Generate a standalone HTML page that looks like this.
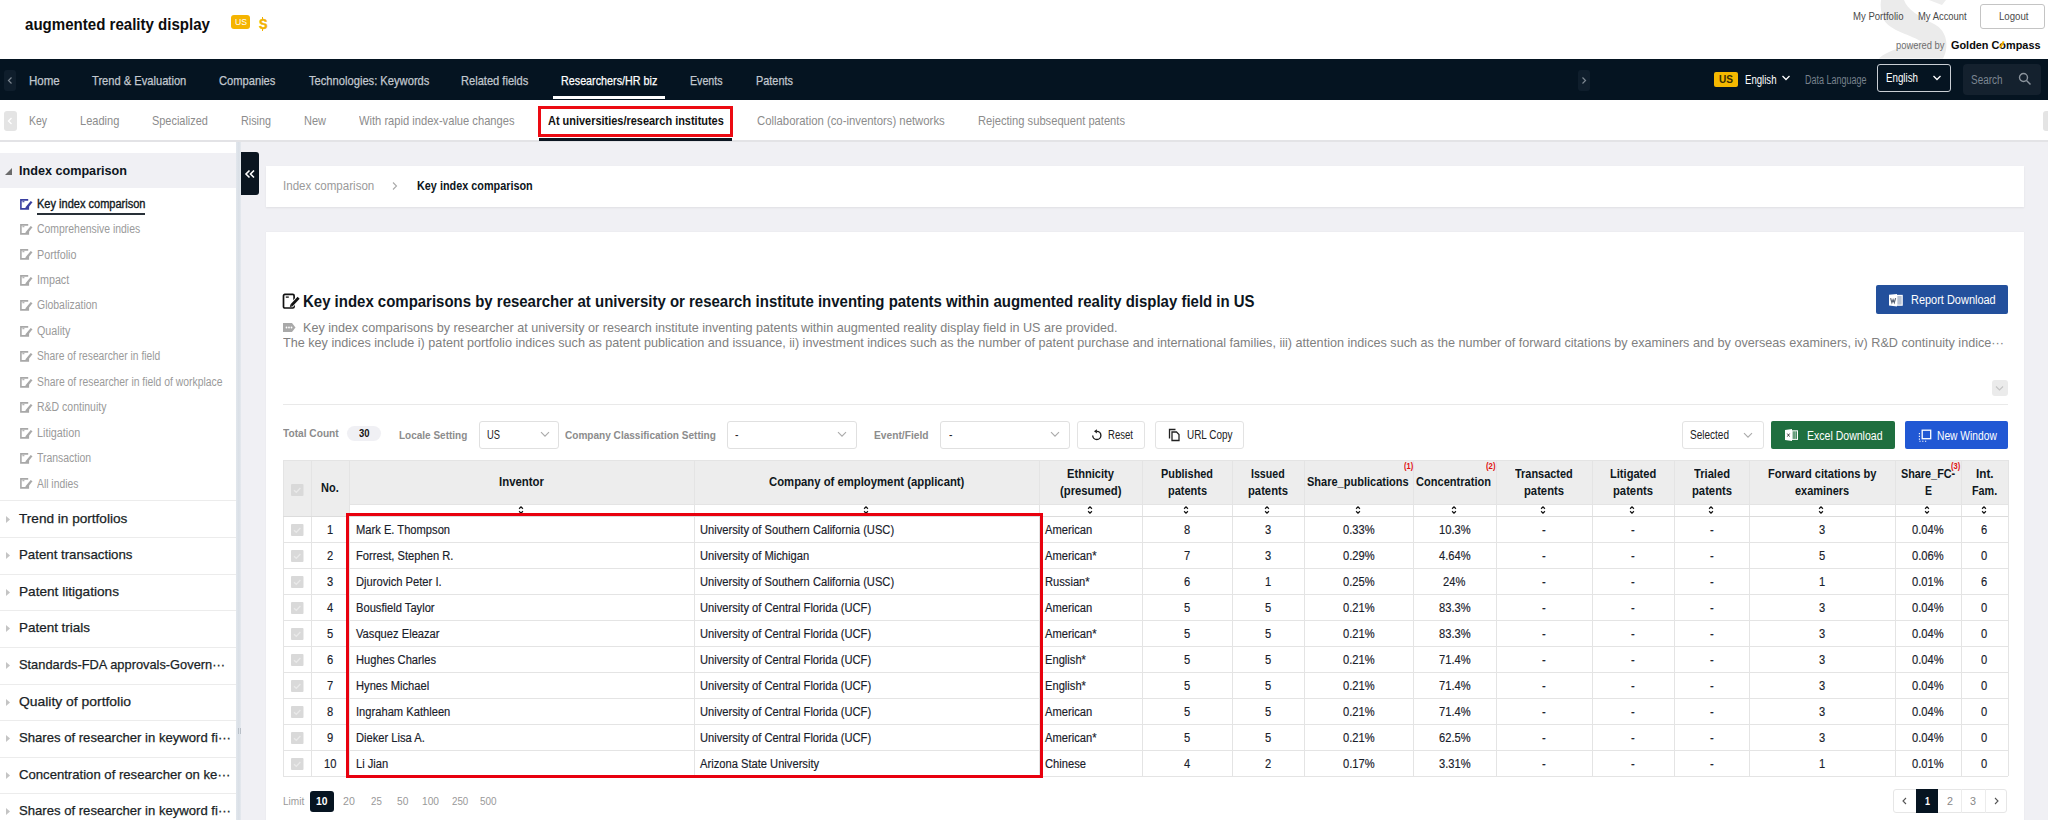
<!DOCTYPE html>
<html><head><meta charset="utf-8"><title>augmented reality display</title>
<style>
*{box-sizing:border-box;margin:0;padding:0}
html,body{width:2048px;height:820px;overflow:hidden;background:#f0f0f4;font-family:"Liberation Sans",sans-serif}
body{position:relative}
.t{position:absolute;white-space:nowrap;line-height:1;transform-origin:0 0}
svg{overflow:visible}
</style></head><body>
<div style="position:absolute;left:0px;top:0px;width:2048px;height:59px;background:#fff"></div>
<svg style="position:absolute;left:1870px;top:0" width="90" height="59" viewBox="0 0 90 59"><path d="M11 0 L34 0 C37 9 48 16 64 24 C78 31 79 48 73 58.5 L9 58.5 C17 50 38 46 52 42 C42 35 20 31 14 20 C11 14 10 6 11 0 Z" fill="#ebebeb"/><path d="M59 0 L76 0 L72 5 Z" fill="#ededed"/></svg>
<div style="position:absolute;left:231px;top:15px;width:19px;height:14px;background:#f5b400;border-radius:3px"></div>
<div style="position:absolute;left:261.8px;top:16.8px;width:1.6px;height:2.4px;background:#f2b200"></div>
<div style="position:absolute;left:261.8px;top:29px;width:1.6px;height:2.2px;background:#f2b200"></div>
<div style="position:absolute;left:1980px;top:4px;width:65px;height:25px;border:1px solid #c4c4c4;border-radius:3px;background:transparent"></div>
<div style="position:absolute;left:0px;top:59px;width:2048px;height:40.5px;background:#051421"></div>
<div style="position:absolute;left:4px;top:70px;width:12px;height:21px;background:#0f1e2c;border-radius:3px"></div>
<svg style="position:absolute;left:4px;top:70px" width="12" height="21"><path d="M7.5 7.5 L4.5 10.5 L7.5 13.5" stroke="#7d8791" stroke-width="1.2" fill="none"/></svg>
<div style="position:absolute;left:553px;top:96px;width:112px;height:3px;background:#fff"></div>
<div style="position:absolute;left:1578px;top:70px;width:12px;height:21px;background:#0f1e2c;border-radius:3px"></div>
<svg style="position:absolute;left:1578px;top:70px" width="12" height="21"><path d="M4.5 7.5 L7.5 10.5 L4.5 13.5" stroke="#7d8791" stroke-width="1.2" fill="none"/></svg>
<div style="position:absolute;left:1714px;top:71.5px;width:24px;height:15.5px;background:#f5b800;border-radius:2px"></div>
<svg style="position:absolute;left:1781px;top:74px" width="10" height="8"><path d="M1.5 2 L5 5.5 L8.5 2" stroke="#fff" stroke-width="1.3" fill="none"/></svg>
<div style="position:absolute;left:1877px;top:64.3px;width:74px;height:28px;border:1px solid #c9ced4;border-radius:3px"></div>
<svg style="position:absolute;left:1932px;top:74px" width="10" height="8"><path d="M1.5 2 L5 5.5 L8.5 2" stroke="#fff" stroke-width="1.3" fill="none"/></svg>
<div style="position:absolute;left:1962.5px;top:64.3px;width:78px;height:31px;background:#14212e;border-radius:4px"></div>
<svg style="position:absolute;left:2018px;top:72px" width="14" height="14"><circle cx="5.5" cy="5.5" r="4" stroke="#8b949d" stroke-width="1.4" fill="none"/><path d="M8.5 8.5 L12.5 12.5" stroke="#8b949d" stroke-width="1.5"/></svg>
<div style="position:absolute;left:0px;top:100px;width:2048px;height:40px;background:#fff"></div>
<div style="position:absolute;left:0px;top:140px;width:2048px;height:2px;background:#e3e3e6"></div>
<div style="position:absolute;left:4px;top:111px;width:12.5px;height:20px;background:#e4e4e4;border-radius:3px"></div>
<svg style="position:absolute;left:4px;top:111px" width="12" height="20"><path d="M7.5 7 L4.5 10 L7.5 13" stroke="#fff" stroke-width="1.3" fill="none"/></svg>
<div style="position:absolute;left:2043px;top:111px;width:6px;height:20px;background:#e4e4e4;border-radius:3px 0 0 3px"></div>
<div style="position:absolute;left:539px;top:138px;width:193px;height:2.5px;background:#0b1520"></div>
<div style="position:absolute;left:0px;top:142px;width:236px;height:678px;background:#fff"></div>
<div style="position:absolute;left:236px;top:142px;width:5px;height:678px;background:linear-gradient(90deg,#e2e7ed,#d9dfe6 60%,#e6eaef)"></div>
<div style="position:absolute;left:237.5px;top:727.8px;width:0.8px;height:6px;background:#b9c0c8"></div>
<div style="position:absolute;left:239.5px;top:727.8px;width:0.8px;height:6px;background:#b9c0c8"></div>
<div style="position:absolute;left:0px;top:152.7px;width:236px;height:35px;background:#f0f0f4"></div>
<svg style="position:absolute;left:4px;top:166px" width="9" height="10"><path d="M1 9 L8 9 L8 2 Z" fill="#6b6b6b"/></svg>
<svg style="position:absolute;left:20px;top:198.5px" width="13" height="11" viewBox="0 0 13 11"><path d="M8.2 0.9 H0.9 V9.9 H8.3 V6.5" stroke="#3a3fa0" stroke-width="1.6" fill="none"/><path d="M2.4 2.7 H4.4" stroke="#3a3fa0" stroke-width="1.1"/><path d="M11.6 2.6 L6.2 9.3" stroke="#3a3fa0" stroke-width="2.3"/></svg>
<svg style="position:absolute;left:20px;top:223.9px" width="13" height="11" viewBox="0 0 13 11"><path d="M8.2 0.9 H0.9 V9.9 H8.3 V6.5" stroke="#a8a8a8" stroke-width="1.6" fill="none"/><path d="M2.4 2.7 H4.4" stroke="#a8a8a8" stroke-width="1.1"/><path d="M11.6 2.6 L6.2 9.3" stroke="#a8a8a8" stroke-width="2.3"/></svg>
<svg style="position:absolute;left:20px;top:249.4px" width="13" height="11" viewBox="0 0 13 11"><path d="M8.2 0.9 H0.9 V9.9 H8.3 V6.5" stroke="#a8a8a8" stroke-width="1.6" fill="none"/><path d="M2.4 2.7 H4.4" stroke="#a8a8a8" stroke-width="1.1"/><path d="M11.6 2.6 L6.2 9.3" stroke="#a8a8a8" stroke-width="2.3"/></svg>
<svg style="position:absolute;left:20px;top:274.8px" width="13" height="11" viewBox="0 0 13 11"><path d="M8.2 0.9 H0.9 V9.9 H8.3 V6.5" stroke="#a8a8a8" stroke-width="1.6" fill="none"/><path d="M2.4 2.7 H4.4" stroke="#a8a8a8" stroke-width="1.1"/><path d="M11.6 2.6 L6.2 9.3" stroke="#a8a8a8" stroke-width="2.3"/></svg>
<svg style="position:absolute;left:20px;top:300.3px" width="13" height="11" viewBox="0 0 13 11"><path d="M8.2 0.9 H0.9 V9.9 H8.3 V6.5" stroke="#a8a8a8" stroke-width="1.6" fill="none"/><path d="M2.4 2.7 H4.4" stroke="#a8a8a8" stroke-width="1.1"/><path d="M11.6 2.6 L6.2 9.3" stroke="#a8a8a8" stroke-width="2.3"/></svg>
<svg style="position:absolute;left:20px;top:325.8px" width="13" height="11" viewBox="0 0 13 11"><path d="M8.2 0.9 H0.9 V9.9 H8.3 V6.5" stroke="#a8a8a8" stroke-width="1.6" fill="none"/><path d="M2.4 2.7 H4.4" stroke="#a8a8a8" stroke-width="1.1"/><path d="M11.6 2.6 L6.2 9.3" stroke="#a8a8a8" stroke-width="2.3"/></svg>
<svg style="position:absolute;left:20px;top:351.2px" width="13" height="11" viewBox="0 0 13 11"><path d="M8.2 0.9 H0.9 V9.9 H8.3 V6.5" stroke="#a8a8a8" stroke-width="1.6" fill="none"/><path d="M2.4 2.7 H4.4" stroke="#a8a8a8" stroke-width="1.1"/><path d="M11.6 2.6 L6.2 9.3" stroke="#a8a8a8" stroke-width="2.3"/></svg>
<svg style="position:absolute;left:20px;top:376.7px" width="13" height="11" viewBox="0 0 13 11"><path d="M8.2 0.9 H0.9 V9.9 H8.3 V6.5" stroke="#a8a8a8" stroke-width="1.6" fill="none"/><path d="M2.4 2.7 H4.4" stroke="#a8a8a8" stroke-width="1.1"/><path d="M11.6 2.6 L6.2 9.3" stroke="#a8a8a8" stroke-width="2.3"/></svg>
<svg style="position:absolute;left:20px;top:402.1px" width="13" height="11" viewBox="0 0 13 11"><path d="M8.2 0.9 H0.9 V9.9 H8.3 V6.5" stroke="#a8a8a8" stroke-width="1.6" fill="none"/><path d="M2.4 2.7 H4.4" stroke="#a8a8a8" stroke-width="1.1"/><path d="M11.6 2.6 L6.2 9.3" stroke="#a8a8a8" stroke-width="2.3"/></svg>
<svg style="position:absolute;left:20px;top:427.6px" width="13" height="11" viewBox="0 0 13 11"><path d="M8.2 0.9 H0.9 V9.9 H8.3 V6.5" stroke="#a8a8a8" stroke-width="1.6" fill="none"/><path d="M2.4 2.7 H4.4" stroke="#a8a8a8" stroke-width="1.1"/><path d="M11.6 2.6 L6.2 9.3" stroke="#a8a8a8" stroke-width="2.3"/></svg>
<svg style="position:absolute;left:20px;top:453.0px" width="13" height="11" viewBox="0 0 13 11"><path d="M8.2 0.9 H0.9 V9.9 H8.3 V6.5" stroke="#a8a8a8" stroke-width="1.6" fill="none"/><path d="M2.4 2.7 H4.4" stroke="#a8a8a8" stroke-width="1.1"/><path d="M11.6 2.6 L6.2 9.3" stroke="#a8a8a8" stroke-width="2.3"/></svg>
<svg style="position:absolute;left:20px;top:478.4px" width="13" height="11" viewBox="0 0 13 11"><path d="M8.2 0.9 H0.9 V9.9 H8.3 V6.5" stroke="#a8a8a8" stroke-width="1.6" fill="none"/><path d="M2.4 2.7 H4.4" stroke="#a8a8a8" stroke-width="1.1"/><path d="M11.6 2.6 L6.2 9.3" stroke="#a8a8a8" stroke-width="2.3"/></svg>
<div style="position:absolute;left:36.6px;top:212.8px;width:108.5px;height:2px;background:#283038"></div>
<div style="position:absolute;left:0px;top:500.3px;width:236px;height:1px;background:#ececec"></div>
<svg style="position:absolute;left:5px;top:514.6px" width="6" height="9"><path d="M1 1 L5 4.5 L1 8 Z" fill="#c4c4c4"/></svg>
<div style="position:absolute;left:0px;top:537.2px;width:236px;height:1px;background:#ececec"></div>
<svg style="position:absolute;left:5px;top:551.2px" width="6" height="9"><path d="M1 1 L5 4.5 L1 8 Z" fill="#c4c4c4"/></svg>
<div style="position:absolute;left:0px;top:573.8px;width:236px;height:1px;background:#ececec"></div>
<svg style="position:absolute;left:5px;top:587.8px" width="6" height="9"><path d="M1 1 L5 4.5 L1 8 Z" fill="#c4c4c4"/></svg>
<div style="position:absolute;left:0px;top:610.4px;width:236px;height:1px;background:#ececec"></div>
<svg style="position:absolute;left:5px;top:624.4px" width="6" height="9"><path d="M1 1 L5 4.5 L1 8 Z" fill="#c4c4c4"/></svg>
<div style="position:absolute;left:0px;top:647.0px;width:236px;height:1px;background:#ececec"></div>
<svg style="position:absolute;left:5px;top:661.0px" width="6" height="9"><path d="M1 1 L5 4.5 L1 8 Z" fill="#c4c4c4"/></svg>
<div style="position:absolute;left:0px;top:683.6px;width:236px;height:1px;background:#ececec"></div>
<svg style="position:absolute;left:5px;top:697.6px" width="6" height="9"><path d="M1 1 L5 4.5 L1 8 Z" fill="#c4c4c4"/></svg>
<div style="position:absolute;left:0px;top:720.2px;width:236px;height:1px;background:#ececec"></div>
<svg style="position:absolute;left:5px;top:734.2px" width="6" height="9"><path d="M1 1 L5 4.5 L1 8 Z" fill="#c4c4c4"/></svg>
<div style="position:absolute;left:0px;top:756.8px;width:236px;height:1px;background:#ececec"></div>
<svg style="position:absolute;left:5px;top:770.8px" width="6" height="9"><path d="M1 1 L5 4.5 L1 8 Z" fill="#c4c4c4"/></svg>
<div style="position:absolute;left:0px;top:793.4px;width:236px;height:1px;background:#ececec"></div>
<svg style="position:absolute;left:5px;top:807.4px" width="6" height="9"><path d="M1 1 L5 4.5 L1 8 Z" fill="#c4c4c4"/></svg>
<div style="position:absolute;left:241px;top:152.4px;width:18px;height:42.6px;background:#0a1520;border-radius:0 3px 3px 0"></div>
<svg style="position:absolute;left:241px;top:152px" width="18" height="43"><path d="M8.5 18.5 L5 22 L8.5 25.5 M13 18.5 L9.5 22 L13 25.5" stroke="#fff" stroke-width="1.6" fill="none"/></svg>
<div style="position:absolute;left:266px;top:166px;width:1758px;height:40.5px;background:#fff;box-shadow:0 1px 2px rgba(0,0,0,0.07)"></div>
<svg style="position:absolute;left:391px;top:181px" width="8" height="10"><path d="M2 1.5 L5.5 5 L2 8.5" stroke="#aaa" stroke-width="1.1" fill="none"/></svg>
<div style="position:absolute;left:266px;top:231.7px;width:1758px;height:600px;background:#fff;box-shadow:0 0 1px rgba(0,0,0,0.08)"></div>
<svg style="position:absolute;left:282px;top:292px" width="18" height="17" viewBox="0 0 18 17"><rect x="1.5" y="2.4" width="10.6" height="13.6" rx="1.3" stroke="#111" stroke-width="1.7" fill="none"/><path d="M3.8 5.1 H6.8" stroke="#111" stroke-width="1.3"/><path d="M16.6 5.8 L9.6 13.2" stroke="#fff" stroke-width="4.6"/><path d="M16.6 5.8 L9.6 13.2" stroke="#111" stroke-width="2.8"/><path d="M8.6 12.2 L10.8 14.2 L7.8 15 Z" fill="#111"/></svg>
<div style="position:absolute;left:1876px;top:285.4px;width:132px;height:28.3px;background:#23509c;border-radius:2px"></div>
<svg style="position:absolute;left:1889px;top:294px" width="14" height="13" viewBox="0 0 14 13"><rect x="7.8" y="1.4" width="5.4" height="9.8" fill="#b9c3d3" stroke="#fff" stroke-width="1.1"/><path d="M0 0.8 L8 0 L8 12.5 L0 11.6 Z" fill="#fff"/><path d="M1.6 4.2 L2.9 8.6 L4.1 5.6 L5.3 8.6 L6.6 4.2" stroke="#5a6475" stroke-width="1.2" fill="none"/></svg>
<svg style="position:absolute;left:283px;top:323px" width="13" height="9" viewBox="0 0 13 9"><path d="M0 0 H9 L12.5 4.5 L9 9 H0 Z" fill="#a9a9a9"/><circle cx="3.5" cy="4.5" r="0.9" fill="#fff"/><circle cx="6" cy="4.5" r="0.9" fill="#fff"/><circle cx="8.5" cy="4.5" r="0.9" fill="#fff"/></svg>
<div style="position:absolute;left:1991.5px;top:379.6px;width:16.5px;height:16px;background:#ebebeb;border-radius:3px"></div>
<svg style="position:absolute;left:1991px;top:380px" width="17" height="16"><path d="M5 6.5 L8.5 10 L12 6.5" stroke="#c4c4c4" stroke-width="1.1" fill="none"/></svg>
<div style="position:absolute;left:283px;top:404px;width:1725px;height:1px;background:#e9e9e9"></div>
<div style="position:absolute;left:346.8px;top:425.8px;width:34.5px;height:15.5px;background:#f0f0f4;border-radius:8px"></div>
<div style="position:absolute;left:478.6px;top:421.3px;width:80.89999999999998px;height:28px;border:1px solid #e0e0e0;border-radius:3px;background:#fff"></div>
<svg style="position:absolute;left:539.5px;top:431px" width="10" height="7"><path d="M1 1.2 L5 5.2 L9 1.2" stroke="#aaa" stroke-width="1.1" fill="none"/></svg>
<div style="position:absolute;left:726.5px;top:421.3px;width:130.39999999999998px;height:28px;border:1px solid #e0e0e0;border-radius:3px;background:#fff"></div>
<svg style="position:absolute;left:836.9px;top:431px" width="10" height="7"><path d="M1 1.2 L5 5.2 L9 1.2" stroke="#aaa" stroke-width="1.1" fill="none"/></svg>
<div style="position:absolute;left:940px;top:421.3px;width:129.70000000000005px;height:28px;border:1px solid #e0e0e0;border-radius:3px;background:#fff"></div>
<svg style="position:absolute;left:1049.7px;top:431px" width="10" height="7"><path d="M1 1.2 L5 5.2 L9 1.2" stroke="#aaa" stroke-width="1.1" fill="none"/></svg>
<div style="position:absolute;left:1077.4px;top:421.2px;width:68px;height:28.3px;border:1px solid #e3e3e3;border-radius:3px;background:#fff"></div>
<svg style="position:absolute;left:1091px;top:429px" width="12" height="13" viewBox="0 0 12 13"><path d="M5.8 2.3 A4.1 4.1 0 1 1 1.7 6.4" stroke="#1a1a1a" stroke-width="1.35" fill="none"/><path d="M5.9 0.2 L3 2.3 L5.9 4.5 Z" fill="#1a1a1a"/></svg>
<div style="position:absolute;left:1155.2px;top:421.2px;width:88.4px;height:28.3px;border:1px solid #e3e3e3;border-radius:3px;background:#fff"></div>
<svg style="position:absolute;left:1168px;top:428px" width="13" height="14" viewBox="0 0 13 14"><path d="M1.5 10.5 V1.5 H7.5" stroke="#222" stroke-width="1.3" fill="none"/><path d="M4 4 H8.5 L11 6.5 V12.5 H4 Z" stroke="#222" stroke-width="1.3" fill="none"/></svg>
<div style="position:absolute;left:1681.5px;top:421.2px;width:82px;height:28.3px;border:1px solid #e3e3e3;border-radius:3px;background:#fff"></div>
<svg style="position:absolute;left:1743px;top:432px" width="10" height="7"><path d="M1 1.2 L5 5.2 L9 1.2" stroke="#aaa" stroke-width="1.1" fill="none"/></svg>
<div style="position:absolute;left:1771.2px;top:421px;width:123.6px;height:28.2px;background:#1f6f3f;border-radius:2px"></div>
<svg style="position:absolute;left:1785px;top:428.5px" width="14" height="13" viewBox="0 0 14 13"><rect x="7.2" y="1.8" width="5.3" height="8.6" fill="none" stroke="#fff" stroke-width="1"/><path d="M9 2 V10.3 M10.8 2 V10.3" stroke="#d8e6dc" stroke-width="0.8"/><path d="M0 0.9 L7 0 L7 12 L0 11 Z" fill="#fff"/><path d="M2.3 4.6 L4.6 7.6 M4.6 4.6 L2.3 7.6" stroke="#333" stroke-width="0.9"/></svg>
<div style="position:absolute;left:1904.5px;top:421px;width:103.1px;height:28.2px;background:#2158d4;border-radius:2px"></div>
<svg style="position:absolute;left:1917.5px;top:429px" width="14" height="14" viewBox="0 0 14 14"><rect x="4.2" y="1.2" width="8.5" height="8.5" fill="none" stroke="#fff" stroke-width="1.3"/><path d="M1.4 4 V5.2 M1.4 6.8 V8 M1.4 9.6 V10.8 M1.4 12.2 H2.6 M4.2 12.2 H5.4 M7 12.2 H8.2" stroke="#fff" stroke-width="1.1"/></svg>
<div style="position:absolute;left:283px;top:460px;width:1725px;height:43.5px;background:#ededed"></div>
<div style="position:absolute;left:283px;top:503.5px;width:66px;height:12.5px;background:#ededed"></div>
<div style="position:absolute;left:282.5px;top:460px;width:1px;height:316px;background:#e4e4e4"></div>
<div style="position:absolute;left:310.5px;top:460px;width:1px;height:316px;background:#e4e4e4"></div>
<div style="position:absolute;left:348.5px;top:460px;width:1px;height:316px;background:#e4e4e4"></div>
<div style="position:absolute;left:693.5px;top:460px;width:1px;height:316px;background:#e4e4e4"></div>
<div style="position:absolute;left:1038.5px;top:460px;width:1px;height:316px;background:#e4e4e4"></div>
<div style="position:absolute;left:1141.5px;top:460px;width:1px;height:316px;background:#e4e4e4"></div>
<div style="position:absolute;left:1231.5px;top:460px;width:1px;height:316px;background:#e4e4e4"></div>
<div style="position:absolute;left:1303.5px;top:460px;width:1px;height:316px;background:#e4e4e4"></div>
<div style="position:absolute;left:1412.5px;top:460px;width:1px;height:316px;background:#e4e4e4"></div>
<div style="position:absolute;left:1495.5px;top:460px;width:1px;height:316px;background:#e4e4e4"></div>
<div style="position:absolute;left:1591.5px;top:460px;width:1px;height:316px;background:#e4e4e4"></div>
<div style="position:absolute;left:1673.5px;top:460px;width:1px;height:316px;background:#e4e4e4"></div>
<div style="position:absolute;left:1748.5px;top:460px;width:1px;height:316px;background:#e4e4e4"></div>
<div style="position:absolute;left:1894.5px;top:460px;width:1px;height:316px;background:#e4e4e4"></div>
<div style="position:absolute;left:1960.5px;top:460px;width:1px;height:316px;background:#e4e4e4"></div>
<div style="position:absolute;left:2007.5px;top:460px;width:1px;height:316px;background:#e4e4e4"></div>
<div style="position:absolute;left:283px;top:460px;width:1725px;height:1px;background:#e4e4e4"></div>
<div style="position:absolute;left:349px;top:503.5px;width:1659px;height:1px;background:#e4e4e4"></div>
<div style="position:absolute;left:283px;top:515.5px;width:1725px;height:1.5px;background:#dcdcdc"></div>
<div style="position:absolute;left:283px;top:541.5px;width:1725px;height:1px;background:#e4e4e4"></div>
<div style="position:absolute;left:283px;top:567.5px;width:1725px;height:1px;background:#e4e4e4"></div>
<div style="position:absolute;left:283px;top:593.5px;width:1725px;height:1px;background:#e4e4e4"></div>
<div style="position:absolute;left:283px;top:619.5px;width:1725px;height:1px;background:#e4e4e4"></div>
<div style="position:absolute;left:283px;top:645.5px;width:1725px;height:1px;background:#e4e4e4"></div>
<div style="position:absolute;left:283px;top:671.5px;width:1725px;height:1px;background:#e4e4e4"></div>
<div style="position:absolute;left:283px;top:697.5px;width:1725px;height:1px;background:#e4e4e4"></div>
<div style="position:absolute;left:283px;top:723.5px;width:1725px;height:1px;background:#e4e4e4"></div>
<div style="position:absolute;left:283px;top:749.5px;width:1725px;height:1px;background:#e4e4e4"></div>
<div style="position:absolute;left:283px;top:775.5px;width:1725px;height:1px;background:#e4e4e4"></div>
<svg style="position:absolute;left:517.8px;top:505px" width="6" height="10"><path d="M1.1 3.7 L3 1.9 L4.9 3.7 M1.1 6.3 L3 8.1 L4.9 6.3" stroke="#111" stroke-width="1.25" fill="none"/></svg>
<svg style="position:absolute;left:862.8px;top:505px" width="6" height="10"><path d="M1.1 3.7 L3 1.9 L4.9 3.7 M1.1 6.3 L3 8.1 L4.9 6.3" stroke="#111" stroke-width="1.25" fill="none"/></svg>
<svg style="position:absolute;left:1086.8px;top:505px" width="6" height="10"><path d="M1.1 3.7 L3 1.9 L4.9 3.7 M1.1 6.3 L3 8.1 L4.9 6.3" stroke="#111" stroke-width="1.25" fill="none"/></svg>
<svg style="position:absolute;left:1183.3px;top:505px" width="6" height="10"><path d="M1.1 3.7 L3 1.9 L4.9 3.7 M1.1 6.3 L3 8.1 L4.9 6.3" stroke="#111" stroke-width="1.25" fill="none"/></svg>
<svg style="position:absolute;left:1264.3px;top:505px" width="6" height="10"><path d="M1.1 3.7 L3 1.9 L4.9 3.7 M1.1 6.3 L3 8.1 L4.9 6.3" stroke="#111" stroke-width="1.25" fill="none"/></svg>
<svg style="position:absolute;left:1354.8px;top:505px" width="6" height="10"><path d="M1.1 3.7 L3 1.9 L4.9 3.7 M1.1 6.3 L3 8.1 L4.9 6.3" stroke="#111" stroke-width="1.25" fill="none"/></svg>
<svg style="position:absolute;left:1450.8px;top:505px" width="6" height="10"><path d="M1.1 3.7 L3 1.9 L4.9 3.7 M1.1 6.3 L3 8.1 L4.9 6.3" stroke="#111" stroke-width="1.25" fill="none"/></svg>
<svg style="position:absolute;left:1540.3px;top:505px" width="6" height="10"><path d="M1.1 3.7 L3 1.9 L4.9 3.7 M1.1 6.3 L3 8.1 L4.9 6.3" stroke="#111" stroke-width="1.25" fill="none"/></svg>
<svg style="position:absolute;left:1629.3px;top:505px" width="6" height="10"><path d="M1.1 3.7 L3 1.9 L4.9 3.7 M1.1 6.3 L3 8.1 L4.9 6.3" stroke="#111" stroke-width="1.25" fill="none"/></svg>
<svg style="position:absolute;left:1707.8px;top:505px" width="6" height="10"><path d="M1.1 3.7 L3 1.9 L4.9 3.7 M1.1 6.3 L3 8.1 L4.9 6.3" stroke="#111" stroke-width="1.25" fill="none"/></svg>
<svg style="position:absolute;left:1818.3px;top:505px" width="6" height="10"><path d="M1.1 3.7 L3 1.9 L4.9 3.7 M1.1 6.3 L3 8.1 L4.9 6.3" stroke="#111" stroke-width="1.25" fill="none"/></svg>
<svg style="position:absolute;left:1924.3px;top:505px" width="6" height="10"><path d="M1.1 3.7 L3 1.9 L4.9 3.7 M1.1 6.3 L3 8.1 L4.9 6.3" stroke="#111" stroke-width="1.25" fill="none"/></svg>
<svg style="position:absolute;left:1980.8px;top:505px" width="6" height="10"><path d="M1.1 3.7 L3 1.9 L4.9 3.7 M1.1 6.3 L3 8.1 L4.9 6.3" stroke="#111" stroke-width="1.25" fill="none"/></svg>
<svg style="position:absolute;left:290.7px;top:483.8px" width="13" height="12"><rect x="0" y="0" width="12.5" height="12" rx="1" fill="#d9d9d9"/><path d="M3 6.2 L5.3 8.3 L9.4 4" stroke="#e9e9e9" stroke-width="1.3" fill="none"/></svg>
<svg style="position:absolute;left:290.7px;top:523.5px" width="13" height="12"><rect x="0" y="0" width="12.5" height="12" rx="1" fill="#d9d9d9"/><path d="M3 6.2 L5.3 8.3 L9.4 4" stroke="#e9e9e9" stroke-width="1.3" fill="none"/></svg>
<svg style="position:absolute;left:290.7px;top:549.5px" width="13" height="12"><rect x="0" y="0" width="12.5" height="12" rx="1" fill="#d9d9d9"/><path d="M3 6.2 L5.3 8.3 L9.4 4" stroke="#e9e9e9" stroke-width="1.3" fill="none"/></svg>
<svg style="position:absolute;left:290.7px;top:575.5px" width="13" height="12"><rect x="0" y="0" width="12.5" height="12" rx="1" fill="#d9d9d9"/><path d="M3 6.2 L5.3 8.3 L9.4 4" stroke="#e9e9e9" stroke-width="1.3" fill="none"/></svg>
<svg style="position:absolute;left:290.7px;top:601.5px" width="13" height="12"><rect x="0" y="0" width="12.5" height="12" rx="1" fill="#d9d9d9"/><path d="M3 6.2 L5.3 8.3 L9.4 4" stroke="#e9e9e9" stroke-width="1.3" fill="none"/></svg>
<svg style="position:absolute;left:290.7px;top:627.5px" width="13" height="12"><rect x="0" y="0" width="12.5" height="12" rx="1" fill="#d9d9d9"/><path d="M3 6.2 L5.3 8.3 L9.4 4" stroke="#e9e9e9" stroke-width="1.3" fill="none"/></svg>
<svg style="position:absolute;left:290.7px;top:653.5px" width="13" height="12"><rect x="0" y="0" width="12.5" height="12" rx="1" fill="#d9d9d9"/><path d="M3 6.2 L5.3 8.3 L9.4 4" stroke="#e9e9e9" stroke-width="1.3" fill="none"/></svg>
<svg style="position:absolute;left:290.7px;top:679.5px" width="13" height="12"><rect x="0" y="0" width="12.5" height="12" rx="1" fill="#d9d9d9"/><path d="M3 6.2 L5.3 8.3 L9.4 4" stroke="#e9e9e9" stroke-width="1.3" fill="none"/></svg>
<svg style="position:absolute;left:290.7px;top:705.5px" width="13" height="12"><rect x="0" y="0" width="12.5" height="12" rx="1" fill="#d9d9d9"/><path d="M3 6.2 L5.3 8.3 L9.4 4" stroke="#e9e9e9" stroke-width="1.3" fill="none"/></svg>
<svg style="position:absolute;left:290.7px;top:731.5px" width="13" height="12"><rect x="0" y="0" width="12.5" height="12" rx="1" fill="#d9d9d9"/><path d="M3 6.2 L5.3 8.3 L9.4 4" stroke="#e9e9e9" stroke-width="1.3" fill="none"/></svg>
<svg style="position:absolute;left:290.7px;top:757.5px" width="13" height="12"><rect x="0" y="0" width="12.5" height="12" rx="1" fill="#d9d9d9"/><path d="M3 6.2 L5.3 8.3 L9.4 4" stroke="#e9e9e9" stroke-width="1.3" fill="none"/></svg>
<div style="position:absolute;left:310.4px;top:791.3px;width:23.2px;height:20.5px;background:#061421;border-radius:3px"></div>
<div style="position:absolute;left:1893.4px;top:789.3px;width:114px;height:24px;border:1px solid #e6e6e6;border-radius:3px;background:#fff"></div>
<div style="position:absolute;left:1916.2px;top:789.3px;width:22px;height:24px;background:#061421"></div>
<div style="position:absolute;left:1961.3px;top:789.3px;width:1px;height:24px;background:#ececec"></div>
<div style="position:absolute;left:1984.8px;top:789.3px;width:1px;height:24px;background:#ececec"></div>
<svg style="position:absolute;left:1900px;top:796px" width="10" height="10"><path d="M6 2 L3 5 L6 8" stroke="#555" stroke-width="1.1" fill="none"/></svg>
<svg style="position:absolute;left:1991px;top:796px" width="10" height="10"><path d="M4 2 L7 5 L4 8" stroke="#555" stroke-width="1.1" fill="none"/></svg>
<div class="t" style="left:25.00px;top:17.05px;font-size:16px;font-weight:700;color:#0d0d0d;transform:scaleX(0.9414);">augmented reality display</div>
<div class="t" style="left:234.50px;top:18.38px;font-size:9px;font-weight:400;color:#fff;transform:scaleX(0.9588);">US</div>
<div class="t" style="left:258.50px;top:17.35px;font-size:14px;font-weight:700;color:#f2b200;transform:scaleX(0.9097);-webkit-text-stroke:0.5px #f2b200;">S</div>
<div class="t" style="left:1853.00px;top:10.69px;font-size:11px;font-weight:400;color:#4a4a4a;transform:scaleX(0.8695);">My Portfolio</div>
<div class="t" style="left:1918.00px;top:10.69px;font-size:11px;font-weight:400;color:#4a4a4a;transform:scaleX(0.8565);">My Account</div>
<div class="t" style="left:1998.50px;top:10.69px;font-size:11px;font-weight:400;color:#4a4a4a;transform:scaleX(0.8765);">Logout</div>
<div class="t" style="left:1896.00px;top:39.69px;font-size:11px;font-weight:400;color:#6e6e6e;transform:scaleX(0.8527);">powered by</div>
<div class="t" style="left:1951.00px;top:39.69px;font-size:11px;font-weight:700;color:#0a0a0a;transform:scaleX(0.9893);">Golden Compass</div>
<div class="t" style="left:28.70px;top:73.99px;font-size:13px;font-weight:400;color:#c2c8cf;transform:scaleX(0.8879);-webkit-text-stroke:0.25px currentColor;">Home</div>
<div class="t" style="left:92.30px;top:73.99px;font-size:13px;font-weight:400;color:#c2c8cf;transform:scaleX(0.8565);-webkit-text-stroke:0.25px currentColor;">Trend &amp; Evaluation</div>
<div class="t" style="left:219.00px;top:73.99px;font-size:13px;font-weight:400;color:#c2c8cf;transform:scaleX(0.8576);-webkit-text-stroke:0.25px currentColor;">Companies</div>
<div class="t" style="left:308.60px;top:73.99px;font-size:13px;font-weight:400;color:#c2c8cf;transform:scaleX(0.8588);-webkit-text-stroke:0.25px currentColor;">Technologies: Keywords</div>
<div class="t" style="left:461.00px;top:73.99px;font-size:13px;font-weight:400;color:#c2c8cf;transform:scaleX(0.8543);-webkit-text-stroke:0.25px currentColor;">Related fields</div>
<div class="t" style="left:561.00px;top:73.99px;font-size:13px;font-weight:400;color:#fff;transform:scaleX(0.8278);-webkit-text-stroke:0.25px currentColor;">Researchers/HR biz</div>
<div class="t" style="left:690.30px;top:73.99px;font-size:13px;font-weight:400;color:#c2c8cf;transform:scaleX(0.8201);-webkit-text-stroke:0.25px currentColor;">Events</div>
<div class="t" style="left:755.70px;top:73.99px;font-size:13px;font-weight:400;color:#c2c8cf;transform:scaleX(0.8369);-webkit-text-stroke:0.25px currentColor;">Patents</div>
<div class="t" style="left:1719.00px;top:74.19px;font-size:11px;font-weight:700;color:#3a2d00;transform:scaleX(0.9162);">US</div>
<div class="t" style="left:1744.50px;top:73.84px;font-size:12px;font-weight:400;color:#fff;transform:scaleX(0.8003);">English</div>
<div class="t" style="left:1805.40px;top:73.84px;font-size:12px;font-weight:400;color:#77818c;transform:scaleX(0.7493);">Data Language</div>
<div class="t" style="left:1886.00px;top:72.34px;font-size:12px;font-weight:400;color:#fff;transform:scaleX(0.8130);">English</div>
<div class="t" style="left:1971.00px;top:74.34px;font-size:12px;font-weight:400;color:#7c8691;transform:scaleX(0.8283);">Search</div>
<div class="t" style="left:29.20px;top:114.29px;font-size:13px;font-weight:400;color:#8c8c8c;transform:scaleX(0.8033);">Key</div>
<div class="t" style="left:80.40px;top:114.29px;font-size:13px;font-weight:400;color:#8c8c8c;transform:scaleX(0.8492);">Leading</div>
<div class="t" style="left:152.30px;top:114.29px;font-size:13px;font-weight:400;color:#8c8c8c;transform:scaleX(0.8406);">Specialized</div>
<div class="t" style="left:241.00px;top:114.29px;font-size:13px;font-weight:400;color:#8c8c8c;transform:scaleX(0.8304);">Rising</div>
<div class="t" style="left:304.00px;top:114.29px;font-size:13px;font-weight:400;color:#8c8c8c;transform:scaleX(0.8456);">New</div>
<div class="t" style="left:359.00px;top:114.29px;font-size:13px;font-weight:400;color:#8c8c8c;transform:scaleX(0.8573);">With rapid index-value changes</div>
<div class="t" style="left:756.80px;top:114.29px;font-size:13px;font-weight:400;color:#8c8c8c;transform:scaleX(0.8718);">Collaboration (co-inventors) networks</div>
<div class="t" style="left:977.50px;top:114.29px;font-size:13px;font-weight:400;color:#8c8c8c;transform:scaleX(0.8582);">Rejecting subsequent patents</div>
<div class="t" style="left:547.50px;top:114.29px;font-size:13px;font-weight:700;color:#111;transform:scaleX(0.8419);">At universities/research institutes</div>
<div class="t" style="left:18.50px;top:164.07px;font-size:13.5px;font-weight:700;color:#0d1520;transform:scaleX(0.9348);">Index comparison</div>
<div class="t" style="left:36.60px;top:197.64px;font-size:12px;font-weight:400;color:#111820;transform:scaleX(0.9190);-webkit-text-stroke:0.35px currentColor;">Key index comparison</div>
<div class="t" style="left:36.60px;top:223.09px;font-size:12px;font-weight:400;color:#9a9a9a;transform:scaleX(0.8692);">Comprehensive indies</div>
<div class="t" style="left:36.60px;top:248.54px;font-size:12px;font-weight:400;color:#9a9a9a;transform:scaleX(0.8971);">Portfolio</div>
<div class="t" style="left:36.60px;top:273.99px;font-size:12px;font-weight:400;color:#9a9a9a;transform:scaleX(0.8941);">Impact</div>
<div class="t" style="left:36.60px;top:299.44px;font-size:12px;font-weight:400;color:#9a9a9a;transform:scaleX(0.8706);">Globalization</div>
<div class="t" style="left:36.60px;top:324.89px;font-size:12px;font-weight:400;color:#9a9a9a;transform:scaleX(0.8940);">Quality</div>
<div class="t" style="left:36.60px;top:350.34px;font-size:12px;font-weight:400;color:#9a9a9a;transform:scaleX(0.8551);">Share of researcher in field</div>
<div class="t" style="left:36.60px;top:375.79px;font-size:12px;font-weight:400;color:#9a9a9a;transform:scaleX(0.8632);">Share of researcher in field of workplace</div>
<div class="t" style="left:36.60px;top:401.24px;font-size:12px;font-weight:400;color:#9a9a9a;transform:scaleX(0.8743);">R&amp;D continuity</div>
<div class="t" style="left:36.60px;top:426.69px;font-size:12px;font-weight:400;color:#9a9a9a;transform:scaleX(0.8991);">Litigation</div>
<div class="t" style="left:36.60px;top:452.14px;font-size:12px;font-weight:400;color:#9a9a9a;transform:scaleX(0.8691);">Transaction</div>
<div class="t" style="left:36.60px;top:477.59px;font-size:12px;font-weight:400;color:#9a9a9a;transform:scaleX(0.8619);">All indies</div>
<div class="t" style="left:19.00px;top:511.59px;font-size:13px;font-weight:400;color:#1a1f26;transform:scaleX(1.0456);-webkit-text-stroke:0.25px currentColor;">Trend in portfolios</div>
<div class="t" style="left:19.00px;top:548.19px;font-size:13px;font-weight:400;color:#1a1f26;transform:scaleX(1.0198);-webkit-text-stroke:0.25px currentColor;">Patent transactions</div>
<div class="t" style="left:19.00px;top:584.79px;font-size:13px;font-weight:400;color:#1a1f26;transform:scaleX(1.0481);-webkit-text-stroke:0.25px currentColor;">Patent litigations</div>
<div class="t" style="left:19.00px;top:621.39px;font-size:13px;font-weight:400;color:#1a1f26;transform:scaleX(1.0341);-webkit-text-stroke:0.25px currentColor;">Patent trials</div>
<div class="t" style="left:19.00px;top:657.99px;font-size:13px;font-weight:400;color:#1a1f26;transform:scaleX(0.9865);-webkit-text-stroke:0.25px currentColor;">Standards-FDA approvals-Govern···</div>
<div class="t" style="left:19.00px;top:694.59px;font-size:13px;font-weight:400;color:#1a1f26;transform:scaleX(1.0689);-webkit-text-stroke:0.25px currentColor;">Quality of portfolio</div>
<div class="t" style="left:19.00px;top:731.19px;font-size:13px;font-weight:400;color:#1a1f26;transform:scaleX(1.0083);-webkit-text-stroke:0.25px currentColor;">Shares of researcher in keyword fi···</div>
<div class="t" style="left:19.00px;top:767.79px;font-size:13px;font-weight:400;color:#1a1f26;transform:scaleX(1.0093);-webkit-text-stroke:0.25px currentColor;">Concentration of researcher on ke···</div>
<div class="t" style="left:19.00px;top:804.39px;font-size:13px;font-weight:400;color:#1a1f26;transform:scaleX(1.0083);-webkit-text-stroke:0.25px currentColor;">Shares of researcher in keyword fi···</div>
<div class="t" style="left:282.70px;top:179.92px;font-size:12.5px;font-weight:400;color:#9a9a9a;transform:scaleX(0.9253);">Index comparison</div>
<div class="t" style="left:417.00px;top:179.92px;font-size:12.5px;font-weight:700;color:#0d1520;transform:scaleX(0.8675);">Key index comparison</div>
<div class="t" style="left:303.00px;top:292.61px;font-size:17px;font-weight:700;color:#0d1520;transform:scaleX(0.8805);">Key index comparisons by researcher at university or research institute inventing patents within augmented reality display field in US</div>
<div class="t" style="left:1911.00px;top:294.04px;font-size:12px;font-weight:400;color:#fff;transform:scaleX(0.9135);">Report Download</div>
<div class="t" style="left:303.00px;top:320.99px;font-size:13px;font-weight:400;color:#808080;transform:scaleX(0.9692);">Key index comparisons by researcher at university or research institute inventing patents within augmented reality display field in US are provided.</div>
<div class="t" style="left:283.00px;top:336.29px;font-size:13px;font-weight:400;color:#808080;transform:scaleX(0.9717);">The key indices include i) patent portfolio indices such as patent publication and issuance, ii) investment indices such as the number of patent purchase and international families, iii) attention indices such as the number of forward citations by examiners and by overseas examiners, iv) R&amp;D continuity indice···</div>
<div class="t" style="left:283.20px;top:428.46px;font-size:11.5px;font-weight:700;color:#8c8c8c;transform:scaleX(0.8837);">Total Count</div>
<div class="t" style="left:358.75px;top:428.19px;font-size:11px;font-weight:700;color:#111;transform:scaleX(0.8571);">30</div>
<div class="t" style="left:398.90px;top:429.76px;font-size:11.5px;font-weight:700;color:#8c8c8c;transform:scaleX(0.8689);">Locale Setting</div>
<div class="t" style="left:487.40px;top:428.84px;font-size:12px;font-weight:400;color:#1d1d1d;transform:scaleX(0.7798);">US</div>
<div class="t" style="left:564.50px;top:429.76px;font-size:11.5px;font-weight:700;color:#8c8c8c;transform:scaleX(0.8746);">Company Classification Setting</div>
<div class="t" style="left:735.00px;top:428.84px;font-size:12px;font-weight:400;color:#1d1d1d;transform:scaleX(0.8750);">-</div>
<div class="t" style="left:874.00px;top:429.76px;font-size:11.5px;font-weight:700;color:#8c8c8c;transform:scaleX(0.8882);">Event/Field</div>
<div class="t" style="left:949.00px;top:428.84px;font-size:12px;font-weight:400;color:#1d1d1d;transform:scaleX(0.8750);">-</div>
<div class="t" style="left:1108.00px;top:428.84px;font-size:12px;font-weight:400;color:#222;transform:scaleX(0.7972);">Reset</div>
<div class="t" style="left:1186.50px;top:428.84px;font-size:12px;font-weight:400;color:#222;transform:scaleX(0.8284);">URL Copy</div>
<div class="t" style="left:1690.30px;top:428.84px;font-size:12px;font-weight:400;color:#222;transform:scaleX(0.8351);">Selected</div>
<div class="t" style="left:1807.00px;top:429.84px;font-size:12px;font-weight:400;color:#fff;transform:scaleX(0.8774);">Excel Download</div>
<div class="t" style="left:1936.70px;top:429.84px;font-size:12px;font-weight:400;color:#fff;transform:scaleX(0.8539);">New Window</div>
<div class="t" style="left:321.15px;top:481.72px;font-size:12.5px;font-weight:700;color:#0f1720;transform:scaleX(0.8788);">No.</div>
<div class="t" style="left:499.00px;top:476.42px;font-size:12.5px;font-weight:700;color:#0f1720;transform:scaleX(0.9125);">Inventor</div>
<div class="t" style="left:768.80px;top:476.42px;font-size:12.5px;font-weight:700;color:#0f1720;transform:scaleX(0.9046);">Company of employment (applicant)</div>
<div class="t" style="left:1306.80px;top:475.82px;font-size:12.5px;font-weight:700;color:#0f1720;transform:scaleX(0.8811);">Share_publications</div>
<div class="t" style="left:1416.00px;top:475.82px;font-size:12.5px;font-weight:700;color:#0f1720;transform:scaleX(0.8851);">Concentration</div>
<div class="t" style="left:1067.00px;top:467.92px;font-size:12.5px;font-weight:700;color:#0f1720;transform:scaleX(0.8902);">Ethnicity</div>
<div class="t" style="left:1059.75px;top:484.62px;font-size:12.5px;font-weight:700;color:#0f1720;transform:scaleX(0.9034);">(presumed)</div>
<div class="t" style="left:1161.00px;top:467.92px;font-size:12.5px;font-weight:700;color:#0f1720;transform:scaleX(0.8705);">Published</div>
<div class="t" style="left:1167.50px;top:484.62px;font-size:12.5px;font-weight:700;color:#0f1720;transform:scaleX(0.8773);">patents</div>
<div class="t" style="left:1251.15px;top:467.92px;font-size:12.5px;font-weight:700;color:#0f1720;transform:scaleX(0.8508);">Issued</div>
<div class="t" style="left:1248.00px;top:484.62px;font-size:12.5px;font-weight:700;color:#0f1720;transform:scaleX(0.8998);">patents</div>
<div class="t" style="left:1515.15px;top:467.92px;font-size:12.5px;font-weight:700;color:#0f1720;transform:scaleX(0.8740);">Transacted</div>
<div class="t" style="left:1524.00px;top:484.62px;font-size:12.5px;font-weight:700;color:#0f1720;transform:scaleX(0.8998);">patents</div>
<div class="t" style="left:1609.85px;top:467.92px;font-size:12.5px;font-weight:700;color:#0f1720;transform:scaleX(0.8888);">Litigated</div>
<div class="t" style="left:1613.00px;top:484.62px;font-size:12.5px;font-weight:700;color:#0f1720;transform:scaleX(0.8998);">patents</div>
<div class="t" style="left:1693.50px;top:467.92px;font-size:12.5px;font-weight:700;color:#0f1720;transform:scaleX(0.8934);">Trialed</div>
<div class="t" style="left:1691.50px;top:484.62px;font-size:12.5px;font-weight:700;color:#0f1720;transform:scaleX(0.8998);">patents</div>
<div class="t" style="left:1767.80px;top:467.92px;font-size:12.5px;font-weight:700;color:#0f1720;transform:scaleX(0.8867);">Forward citations by</div>
<div class="t" style="left:1794.90px;top:484.62px;font-size:12.5px;font-weight:700;color:#0f1720;transform:scaleX(0.8762);">examiners</div>
<div class="t" style="left:1900.90px;top:467.92px;font-size:12.5px;font-weight:700;color:#0f1720;transform:scaleX(0.8668);">Share_FC-</div>
<div class="t" style="left:1924.50px;top:484.62px;font-size:12.5px;font-weight:700;color:#0f1720;transform:scaleX(0.8390);">E</div>
<div class="t" style="left:1975.70px;top:467.92px;font-size:12.5px;font-weight:700;color:#0f1720;transform:scaleX(0.9387);">Int.</div>
<div class="t" style="left:1971.90px;top:484.62px;font-size:12.5px;font-weight:700;color:#0f1720;transform:scaleX(0.8634);">Fam.</div>
<div class="t" style="left:1403.80px;top:462.30px;font-size:8.5px;font-weight:700;color:#e01010;transform:scaleX(0.8854);">(1)</div>
<div class="t" style="left:1486.00px;top:462.30px;font-size:8.5px;font-weight:700;color:#e01010;transform:scaleX(0.9143);">(2)</div>
<div class="t" style="left:1951.40px;top:462.30px;font-size:8.5px;font-weight:700;color:#e01010;transform:scaleX(0.8950);">(3)</div>
<div class="t" style="left:326.89px;top:523.84px;font-size:12px;font-weight:400;color:#18202a;transform:scaleX(0.9300);-webkit-text-stroke:0.15px currentColor;">1</div>
<div class="t" style="left:355.50px;top:523.84px;font-size:12px;font-weight:400;color:#18202a;transform:scaleX(0.9300);-webkit-text-stroke:0.15px currentColor;">Mark E. Thompson</div>
<div class="t" style="left:700.00px;top:523.84px;font-size:12px;font-weight:400;color:#18202a;transform:scaleX(0.9300);-webkit-text-stroke:0.15px currentColor;">University of Southern California (USC)</div>
<div class="t" style="left:1045.40px;top:523.84px;font-size:12px;font-weight:400;color:#18202a;transform:scaleX(0.9300);-webkit-text-stroke:0.15px currentColor;">American</div>
<div class="t" style="left:1183.89px;top:523.84px;font-size:12px;font-weight:400;color:#18202a;transform:scaleX(0.9300);-webkit-text-stroke:0.15px currentColor;">8</div>
<div class="t" style="left:1264.89px;top:523.84px;font-size:12px;font-weight:400;color:#18202a;transform:scaleX(0.9300);-webkit-text-stroke:0.15px currentColor;">3</div>
<div class="t" style="left:1342.68px;top:523.84px;font-size:12px;font-weight:400;color:#18202a;transform:scaleX(0.9300);-webkit-text-stroke:0.15px currentColor;">0.33%</div>
<div class="t" style="left:1438.68px;top:523.84px;font-size:12px;font-weight:400;color:#18202a;transform:scaleX(0.9300);-webkit-text-stroke:0.15px currentColor;">10.3%</div>
<div class="t" style="left:1542.14px;top:523.84px;font-size:12px;font-weight:400;color:#18202a;transform:scaleX(0.9300);-webkit-text-stroke:0.15px currentColor;">-</div>
<div class="t" style="left:1631.14px;top:523.84px;font-size:12px;font-weight:400;color:#18202a;transform:scaleX(0.9300);-webkit-text-stroke:0.15px currentColor;">-</div>
<div class="t" style="left:1709.64px;top:523.84px;font-size:12px;font-weight:400;color:#18202a;transform:scaleX(0.9300);-webkit-text-stroke:0.15px currentColor;">-</div>
<div class="t" style="left:1818.89px;top:523.84px;font-size:12px;font-weight:400;color:#18202a;transform:scaleX(0.9300);-webkit-text-stroke:0.15px currentColor;">3</div>
<div class="t" style="left:1912.18px;top:523.84px;font-size:12px;font-weight:400;color:#18202a;transform:scaleX(0.9300);-webkit-text-stroke:0.15px currentColor;">0.04%</div>
<div class="t" style="left:1981.39px;top:523.84px;font-size:12px;font-weight:400;color:#18202a;transform:scaleX(0.9300);-webkit-text-stroke:0.15px currentColor;">6</div>
<div class="t" style="left:326.89px;top:549.84px;font-size:12px;font-weight:400;color:#18202a;transform:scaleX(0.9300);-webkit-text-stroke:0.15px currentColor;">2</div>
<div class="t" style="left:355.50px;top:549.84px;font-size:12px;font-weight:400;color:#18202a;transform:scaleX(0.9300);-webkit-text-stroke:0.15px currentColor;">Forrest, Stephen R.</div>
<div class="t" style="left:700.00px;top:549.84px;font-size:12px;font-weight:400;color:#18202a;transform:scaleX(0.9300);-webkit-text-stroke:0.15px currentColor;">University of Michigan</div>
<div class="t" style="left:1045.40px;top:549.84px;font-size:12px;font-weight:400;color:#18202a;transform:scaleX(0.9300);-webkit-text-stroke:0.15px currentColor;">American*</div>
<div class="t" style="left:1183.89px;top:549.84px;font-size:12px;font-weight:400;color:#18202a;transform:scaleX(0.9300);-webkit-text-stroke:0.15px currentColor;">7</div>
<div class="t" style="left:1264.89px;top:549.84px;font-size:12px;font-weight:400;color:#18202a;transform:scaleX(0.9300);-webkit-text-stroke:0.15px currentColor;">3</div>
<div class="t" style="left:1342.68px;top:549.84px;font-size:12px;font-weight:400;color:#18202a;transform:scaleX(0.9300);-webkit-text-stroke:0.15px currentColor;">0.29%</div>
<div class="t" style="left:1438.68px;top:549.84px;font-size:12px;font-weight:400;color:#18202a;transform:scaleX(0.9300);-webkit-text-stroke:0.15px currentColor;">4.64%</div>
<div class="t" style="left:1542.14px;top:549.84px;font-size:12px;font-weight:400;color:#18202a;transform:scaleX(0.9300);-webkit-text-stroke:0.15px currentColor;">-</div>
<div class="t" style="left:1631.14px;top:549.84px;font-size:12px;font-weight:400;color:#18202a;transform:scaleX(0.9300);-webkit-text-stroke:0.15px currentColor;">-</div>
<div class="t" style="left:1709.64px;top:549.84px;font-size:12px;font-weight:400;color:#18202a;transform:scaleX(0.9300);-webkit-text-stroke:0.15px currentColor;">-</div>
<div class="t" style="left:1818.89px;top:549.84px;font-size:12px;font-weight:400;color:#18202a;transform:scaleX(0.9300);-webkit-text-stroke:0.15px currentColor;">5</div>
<div class="t" style="left:1912.18px;top:549.84px;font-size:12px;font-weight:400;color:#18202a;transform:scaleX(0.9300);-webkit-text-stroke:0.15px currentColor;">0.06%</div>
<div class="t" style="left:1981.39px;top:549.84px;font-size:12px;font-weight:400;color:#18202a;transform:scaleX(0.9300);-webkit-text-stroke:0.15px currentColor;">0</div>
<div class="t" style="left:326.89px;top:575.84px;font-size:12px;font-weight:400;color:#18202a;transform:scaleX(0.9300);-webkit-text-stroke:0.15px currentColor;">3</div>
<div class="t" style="left:355.50px;top:575.84px;font-size:12px;font-weight:400;color:#18202a;transform:scaleX(0.9300);-webkit-text-stroke:0.15px currentColor;">Djurovich Peter I.</div>
<div class="t" style="left:700.00px;top:575.84px;font-size:12px;font-weight:400;color:#18202a;transform:scaleX(0.9300);-webkit-text-stroke:0.15px currentColor;">University of Southern California (USC)</div>
<div class="t" style="left:1045.40px;top:575.84px;font-size:12px;font-weight:400;color:#18202a;transform:scaleX(0.9300);-webkit-text-stroke:0.15px currentColor;">Russian*</div>
<div class="t" style="left:1183.89px;top:575.84px;font-size:12px;font-weight:400;color:#18202a;transform:scaleX(0.9300);-webkit-text-stroke:0.15px currentColor;">6</div>
<div class="t" style="left:1264.89px;top:575.84px;font-size:12px;font-weight:400;color:#18202a;transform:scaleX(0.9300);-webkit-text-stroke:0.15px currentColor;">1</div>
<div class="t" style="left:1342.68px;top:575.84px;font-size:12px;font-weight:400;color:#18202a;transform:scaleX(0.9300);-webkit-text-stroke:0.15px currentColor;">0.25%</div>
<div class="t" style="left:1443.33px;top:575.84px;font-size:12px;font-weight:400;color:#18202a;transform:scaleX(0.9300);-webkit-text-stroke:0.15px currentColor;">24%</div>
<div class="t" style="left:1542.14px;top:575.84px;font-size:12px;font-weight:400;color:#18202a;transform:scaleX(0.9300);-webkit-text-stroke:0.15px currentColor;">-</div>
<div class="t" style="left:1631.14px;top:575.84px;font-size:12px;font-weight:400;color:#18202a;transform:scaleX(0.9300);-webkit-text-stroke:0.15px currentColor;">-</div>
<div class="t" style="left:1709.64px;top:575.84px;font-size:12px;font-weight:400;color:#18202a;transform:scaleX(0.9300);-webkit-text-stroke:0.15px currentColor;">-</div>
<div class="t" style="left:1818.89px;top:575.84px;font-size:12px;font-weight:400;color:#18202a;transform:scaleX(0.9300);-webkit-text-stroke:0.15px currentColor;">1</div>
<div class="t" style="left:1912.18px;top:575.84px;font-size:12px;font-weight:400;color:#18202a;transform:scaleX(0.9300);-webkit-text-stroke:0.15px currentColor;">0.01%</div>
<div class="t" style="left:1981.39px;top:575.84px;font-size:12px;font-weight:400;color:#18202a;transform:scaleX(0.9300);-webkit-text-stroke:0.15px currentColor;">6</div>
<div class="t" style="left:326.89px;top:601.84px;font-size:12px;font-weight:400;color:#18202a;transform:scaleX(0.9300);-webkit-text-stroke:0.15px currentColor;">4</div>
<div class="t" style="left:355.50px;top:601.84px;font-size:12px;font-weight:400;color:#18202a;transform:scaleX(0.9300);-webkit-text-stroke:0.15px currentColor;">Bousfield Taylor</div>
<div class="t" style="left:700.00px;top:601.84px;font-size:12px;font-weight:400;color:#18202a;transform:scaleX(0.9300);-webkit-text-stroke:0.15px currentColor;">University of Central Florida (UCF)</div>
<div class="t" style="left:1045.40px;top:601.84px;font-size:12px;font-weight:400;color:#18202a;transform:scaleX(0.9300);-webkit-text-stroke:0.15px currentColor;">American</div>
<div class="t" style="left:1183.89px;top:601.84px;font-size:12px;font-weight:400;color:#18202a;transform:scaleX(0.9300);-webkit-text-stroke:0.15px currentColor;">5</div>
<div class="t" style="left:1264.89px;top:601.84px;font-size:12px;font-weight:400;color:#18202a;transform:scaleX(0.9300);-webkit-text-stroke:0.15px currentColor;">5</div>
<div class="t" style="left:1342.68px;top:601.84px;font-size:12px;font-weight:400;color:#18202a;transform:scaleX(0.9300);-webkit-text-stroke:0.15px currentColor;">0.21%</div>
<div class="t" style="left:1438.68px;top:601.84px;font-size:12px;font-weight:400;color:#18202a;transform:scaleX(0.9300);-webkit-text-stroke:0.15px currentColor;">83.3%</div>
<div class="t" style="left:1542.14px;top:601.84px;font-size:12px;font-weight:400;color:#18202a;transform:scaleX(0.9300);-webkit-text-stroke:0.15px currentColor;">-</div>
<div class="t" style="left:1631.14px;top:601.84px;font-size:12px;font-weight:400;color:#18202a;transform:scaleX(0.9300);-webkit-text-stroke:0.15px currentColor;">-</div>
<div class="t" style="left:1709.64px;top:601.84px;font-size:12px;font-weight:400;color:#18202a;transform:scaleX(0.9300);-webkit-text-stroke:0.15px currentColor;">-</div>
<div class="t" style="left:1818.89px;top:601.84px;font-size:12px;font-weight:400;color:#18202a;transform:scaleX(0.9300);-webkit-text-stroke:0.15px currentColor;">3</div>
<div class="t" style="left:1912.18px;top:601.84px;font-size:12px;font-weight:400;color:#18202a;transform:scaleX(0.9300);-webkit-text-stroke:0.15px currentColor;">0.04%</div>
<div class="t" style="left:1981.39px;top:601.84px;font-size:12px;font-weight:400;color:#18202a;transform:scaleX(0.9300);-webkit-text-stroke:0.15px currentColor;">0</div>
<div class="t" style="left:326.89px;top:627.84px;font-size:12px;font-weight:400;color:#18202a;transform:scaleX(0.9300);-webkit-text-stroke:0.15px currentColor;">5</div>
<div class="t" style="left:355.50px;top:627.84px;font-size:12px;font-weight:400;color:#18202a;transform:scaleX(0.9300);-webkit-text-stroke:0.15px currentColor;">Vasquez Eleazar</div>
<div class="t" style="left:700.00px;top:627.84px;font-size:12px;font-weight:400;color:#18202a;transform:scaleX(0.9300);-webkit-text-stroke:0.15px currentColor;">University of Central Florida (UCF)</div>
<div class="t" style="left:1045.40px;top:627.84px;font-size:12px;font-weight:400;color:#18202a;transform:scaleX(0.9300);-webkit-text-stroke:0.15px currentColor;">American*</div>
<div class="t" style="left:1183.89px;top:627.84px;font-size:12px;font-weight:400;color:#18202a;transform:scaleX(0.9300);-webkit-text-stroke:0.15px currentColor;">5</div>
<div class="t" style="left:1264.89px;top:627.84px;font-size:12px;font-weight:400;color:#18202a;transform:scaleX(0.9300);-webkit-text-stroke:0.15px currentColor;">5</div>
<div class="t" style="left:1342.68px;top:627.84px;font-size:12px;font-weight:400;color:#18202a;transform:scaleX(0.9300);-webkit-text-stroke:0.15px currentColor;">0.21%</div>
<div class="t" style="left:1438.68px;top:627.84px;font-size:12px;font-weight:400;color:#18202a;transform:scaleX(0.9300);-webkit-text-stroke:0.15px currentColor;">83.3%</div>
<div class="t" style="left:1542.14px;top:627.84px;font-size:12px;font-weight:400;color:#18202a;transform:scaleX(0.9300);-webkit-text-stroke:0.15px currentColor;">-</div>
<div class="t" style="left:1631.14px;top:627.84px;font-size:12px;font-weight:400;color:#18202a;transform:scaleX(0.9300);-webkit-text-stroke:0.15px currentColor;">-</div>
<div class="t" style="left:1709.64px;top:627.84px;font-size:12px;font-weight:400;color:#18202a;transform:scaleX(0.9300);-webkit-text-stroke:0.15px currentColor;">-</div>
<div class="t" style="left:1818.89px;top:627.84px;font-size:12px;font-weight:400;color:#18202a;transform:scaleX(0.9300);-webkit-text-stroke:0.15px currentColor;">3</div>
<div class="t" style="left:1912.18px;top:627.84px;font-size:12px;font-weight:400;color:#18202a;transform:scaleX(0.9300);-webkit-text-stroke:0.15px currentColor;">0.04%</div>
<div class="t" style="left:1981.39px;top:627.84px;font-size:12px;font-weight:400;color:#18202a;transform:scaleX(0.9300);-webkit-text-stroke:0.15px currentColor;">0</div>
<div class="t" style="left:326.89px;top:653.84px;font-size:12px;font-weight:400;color:#18202a;transform:scaleX(0.9300);-webkit-text-stroke:0.15px currentColor;">6</div>
<div class="t" style="left:355.50px;top:653.84px;font-size:12px;font-weight:400;color:#18202a;transform:scaleX(0.9300);-webkit-text-stroke:0.15px currentColor;">Hughes Charles</div>
<div class="t" style="left:700.00px;top:653.84px;font-size:12px;font-weight:400;color:#18202a;transform:scaleX(0.9300);-webkit-text-stroke:0.15px currentColor;">University of Central Florida (UCF)</div>
<div class="t" style="left:1045.40px;top:653.84px;font-size:12px;font-weight:400;color:#18202a;transform:scaleX(0.9300);-webkit-text-stroke:0.15px currentColor;">English*</div>
<div class="t" style="left:1183.89px;top:653.84px;font-size:12px;font-weight:400;color:#18202a;transform:scaleX(0.9300);-webkit-text-stroke:0.15px currentColor;">5</div>
<div class="t" style="left:1264.89px;top:653.84px;font-size:12px;font-weight:400;color:#18202a;transform:scaleX(0.9300);-webkit-text-stroke:0.15px currentColor;">5</div>
<div class="t" style="left:1342.68px;top:653.84px;font-size:12px;font-weight:400;color:#18202a;transform:scaleX(0.9300);-webkit-text-stroke:0.15px currentColor;">0.21%</div>
<div class="t" style="left:1438.68px;top:653.84px;font-size:12px;font-weight:400;color:#18202a;transform:scaleX(0.9300);-webkit-text-stroke:0.15px currentColor;">71.4%</div>
<div class="t" style="left:1542.14px;top:653.84px;font-size:12px;font-weight:400;color:#18202a;transform:scaleX(0.9300);-webkit-text-stroke:0.15px currentColor;">-</div>
<div class="t" style="left:1631.14px;top:653.84px;font-size:12px;font-weight:400;color:#18202a;transform:scaleX(0.9300);-webkit-text-stroke:0.15px currentColor;">-</div>
<div class="t" style="left:1709.64px;top:653.84px;font-size:12px;font-weight:400;color:#18202a;transform:scaleX(0.9300);-webkit-text-stroke:0.15px currentColor;">-</div>
<div class="t" style="left:1818.89px;top:653.84px;font-size:12px;font-weight:400;color:#18202a;transform:scaleX(0.9300);-webkit-text-stroke:0.15px currentColor;">3</div>
<div class="t" style="left:1912.18px;top:653.84px;font-size:12px;font-weight:400;color:#18202a;transform:scaleX(0.9300);-webkit-text-stroke:0.15px currentColor;">0.04%</div>
<div class="t" style="left:1981.39px;top:653.84px;font-size:12px;font-weight:400;color:#18202a;transform:scaleX(0.9300);-webkit-text-stroke:0.15px currentColor;">0</div>
<div class="t" style="left:326.89px;top:679.84px;font-size:12px;font-weight:400;color:#18202a;transform:scaleX(0.9300);-webkit-text-stroke:0.15px currentColor;">7</div>
<div class="t" style="left:355.50px;top:679.84px;font-size:12px;font-weight:400;color:#18202a;transform:scaleX(0.9300);-webkit-text-stroke:0.15px currentColor;">Hynes Michael</div>
<div class="t" style="left:700.00px;top:679.84px;font-size:12px;font-weight:400;color:#18202a;transform:scaleX(0.9300);-webkit-text-stroke:0.15px currentColor;">University of Central Florida (UCF)</div>
<div class="t" style="left:1045.40px;top:679.84px;font-size:12px;font-weight:400;color:#18202a;transform:scaleX(0.9300);-webkit-text-stroke:0.15px currentColor;">English*</div>
<div class="t" style="left:1183.89px;top:679.84px;font-size:12px;font-weight:400;color:#18202a;transform:scaleX(0.9300);-webkit-text-stroke:0.15px currentColor;">5</div>
<div class="t" style="left:1264.89px;top:679.84px;font-size:12px;font-weight:400;color:#18202a;transform:scaleX(0.9300);-webkit-text-stroke:0.15px currentColor;">5</div>
<div class="t" style="left:1342.68px;top:679.84px;font-size:12px;font-weight:400;color:#18202a;transform:scaleX(0.9300);-webkit-text-stroke:0.15px currentColor;">0.21%</div>
<div class="t" style="left:1438.68px;top:679.84px;font-size:12px;font-weight:400;color:#18202a;transform:scaleX(0.9300);-webkit-text-stroke:0.15px currentColor;">71.4%</div>
<div class="t" style="left:1542.14px;top:679.84px;font-size:12px;font-weight:400;color:#18202a;transform:scaleX(0.9300);-webkit-text-stroke:0.15px currentColor;">-</div>
<div class="t" style="left:1631.14px;top:679.84px;font-size:12px;font-weight:400;color:#18202a;transform:scaleX(0.9300);-webkit-text-stroke:0.15px currentColor;">-</div>
<div class="t" style="left:1709.64px;top:679.84px;font-size:12px;font-weight:400;color:#18202a;transform:scaleX(0.9300);-webkit-text-stroke:0.15px currentColor;">-</div>
<div class="t" style="left:1818.89px;top:679.84px;font-size:12px;font-weight:400;color:#18202a;transform:scaleX(0.9300);-webkit-text-stroke:0.15px currentColor;">3</div>
<div class="t" style="left:1912.18px;top:679.84px;font-size:12px;font-weight:400;color:#18202a;transform:scaleX(0.9300);-webkit-text-stroke:0.15px currentColor;">0.04%</div>
<div class="t" style="left:1981.39px;top:679.84px;font-size:12px;font-weight:400;color:#18202a;transform:scaleX(0.9300);-webkit-text-stroke:0.15px currentColor;">0</div>
<div class="t" style="left:326.89px;top:705.84px;font-size:12px;font-weight:400;color:#18202a;transform:scaleX(0.9300);-webkit-text-stroke:0.15px currentColor;">8</div>
<div class="t" style="left:355.50px;top:705.84px;font-size:12px;font-weight:400;color:#18202a;transform:scaleX(0.9300);-webkit-text-stroke:0.15px currentColor;">Ingraham Kathleen</div>
<div class="t" style="left:700.00px;top:705.84px;font-size:12px;font-weight:400;color:#18202a;transform:scaleX(0.9300);-webkit-text-stroke:0.15px currentColor;">University of Central Florida (UCF)</div>
<div class="t" style="left:1045.40px;top:705.84px;font-size:12px;font-weight:400;color:#18202a;transform:scaleX(0.9300);-webkit-text-stroke:0.15px currentColor;">American</div>
<div class="t" style="left:1183.89px;top:705.84px;font-size:12px;font-weight:400;color:#18202a;transform:scaleX(0.9300);-webkit-text-stroke:0.15px currentColor;">5</div>
<div class="t" style="left:1264.89px;top:705.84px;font-size:12px;font-weight:400;color:#18202a;transform:scaleX(0.9300);-webkit-text-stroke:0.15px currentColor;">5</div>
<div class="t" style="left:1342.68px;top:705.84px;font-size:12px;font-weight:400;color:#18202a;transform:scaleX(0.9300);-webkit-text-stroke:0.15px currentColor;">0.21%</div>
<div class="t" style="left:1438.68px;top:705.84px;font-size:12px;font-weight:400;color:#18202a;transform:scaleX(0.9300);-webkit-text-stroke:0.15px currentColor;">71.4%</div>
<div class="t" style="left:1542.14px;top:705.84px;font-size:12px;font-weight:400;color:#18202a;transform:scaleX(0.9300);-webkit-text-stroke:0.15px currentColor;">-</div>
<div class="t" style="left:1631.14px;top:705.84px;font-size:12px;font-weight:400;color:#18202a;transform:scaleX(0.9300);-webkit-text-stroke:0.15px currentColor;">-</div>
<div class="t" style="left:1709.64px;top:705.84px;font-size:12px;font-weight:400;color:#18202a;transform:scaleX(0.9300);-webkit-text-stroke:0.15px currentColor;">-</div>
<div class="t" style="left:1818.89px;top:705.84px;font-size:12px;font-weight:400;color:#18202a;transform:scaleX(0.9300);-webkit-text-stroke:0.15px currentColor;">3</div>
<div class="t" style="left:1912.18px;top:705.84px;font-size:12px;font-weight:400;color:#18202a;transform:scaleX(0.9300);-webkit-text-stroke:0.15px currentColor;">0.04%</div>
<div class="t" style="left:1981.39px;top:705.84px;font-size:12px;font-weight:400;color:#18202a;transform:scaleX(0.9300);-webkit-text-stroke:0.15px currentColor;">0</div>
<div class="t" style="left:326.89px;top:731.84px;font-size:12px;font-weight:400;color:#18202a;transform:scaleX(0.9300);-webkit-text-stroke:0.15px currentColor;">9</div>
<div class="t" style="left:355.50px;top:731.84px;font-size:12px;font-weight:400;color:#18202a;transform:scaleX(0.9300);-webkit-text-stroke:0.15px currentColor;">Dieker Lisa A.</div>
<div class="t" style="left:700.00px;top:731.84px;font-size:12px;font-weight:400;color:#18202a;transform:scaleX(0.9300);-webkit-text-stroke:0.15px currentColor;">University of Central Florida (UCF)</div>
<div class="t" style="left:1045.40px;top:731.84px;font-size:12px;font-weight:400;color:#18202a;transform:scaleX(0.9300);-webkit-text-stroke:0.15px currentColor;">American*</div>
<div class="t" style="left:1183.89px;top:731.84px;font-size:12px;font-weight:400;color:#18202a;transform:scaleX(0.9300);-webkit-text-stroke:0.15px currentColor;">5</div>
<div class="t" style="left:1264.89px;top:731.84px;font-size:12px;font-weight:400;color:#18202a;transform:scaleX(0.9300);-webkit-text-stroke:0.15px currentColor;">5</div>
<div class="t" style="left:1342.68px;top:731.84px;font-size:12px;font-weight:400;color:#18202a;transform:scaleX(0.9300);-webkit-text-stroke:0.15px currentColor;">0.21%</div>
<div class="t" style="left:1438.68px;top:731.84px;font-size:12px;font-weight:400;color:#18202a;transform:scaleX(0.9300);-webkit-text-stroke:0.15px currentColor;">62.5%</div>
<div class="t" style="left:1542.14px;top:731.84px;font-size:12px;font-weight:400;color:#18202a;transform:scaleX(0.9300);-webkit-text-stroke:0.15px currentColor;">-</div>
<div class="t" style="left:1631.14px;top:731.84px;font-size:12px;font-weight:400;color:#18202a;transform:scaleX(0.9300);-webkit-text-stroke:0.15px currentColor;">-</div>
<div class="t" style="left:1709.64px;top:731.84px;font-size:12px;font-weight:400;color:#18202a;transform:scaleX(0.9300);-webkit-text-stroke:0.15px currentColor;">-</div>
<div class="t" style="left:1818.89px;top:731.84px;font-size:12px;font-weight:400;color:#18202a;transform:scaleX(0.9300);-webkit-text-stroke:0.15px currentColor;">3</div>
<div class="t" style="left:1912.18px;top:731.84px;font-size:12px;font-weight:400;color:#18202a;transform:scaleX(0.9300);-webkit-text-stroke:0.15px currentColor;">0.04%</div>
<div class="t" style="left:1981.39px;top:731.84px;font-size:12px;font-weight:400;color:#18202a;transform:scaleX(0.9300);-webkit-text-stroke:0.15px currentColor;">0</div>
<div class="t" style="left:323.79px;top:757.84px;font-size:12px;font-weight:400;color:#18202a;transform:scaleX(0.9300);-webkit-text-stroke:0.15px currentColor;">10</div>
<div class="t" style="left:355.50px;top:757.84px;font-size:12px;font-weight:400;color:#18202a;transform:scaleX(0.9300);-webkit-text-stroke:0.15px currentColor;">Li Jian</div>
<div class="t" style="left:700.00px;top:757.84px;font-size:12px;font-weight:400;color:#18202a;transform:scaleX(0.9300);-webkit-text-stroke:0.15px currentColor;">Arizona State University</div>
<div class="t" style="left:1045.40px;top:757.84px;font-size:12px;font-weight:400;color:#18202a;transform:scaleX(0.9300);-webkit-text-stroke:0.15px currentColor;">Chinese</div>
<div class="t" style="left:1183.89px;top:757.84px;font-size:12px;font-weight:400;color:#18202a;transform:scaleX(0.9300);-webkit-text-stroke:0.15px currentColor;">4</div>
<div class="t" style="left:1264.89px;top:757.84px;font-size:12px;font-weight:400;color:#18202a;transform:scaleX(0.9300);-webkit-text-stroke:0.15px currentColor;">2</div>
<div class="t" style="left:1342.68px;top:757.84px;font-size:12px;font-weight:400;color:#18202a;transform:scaleX(0.9300);-webkit-text-stroke:0.15px currentColor;">0.17%</div>
<div class="t" style="left:1438.68px;top:757.84px;font-size:12px;font-weight:400;color:#18202a;transform:scaleX(0.9300);-webkit-text-stroke:0.15px currentColor;">3.31%</div>
<div class="t" style="left:1542.14px;top:757.84px;font-size:12px;font-weight:400;color:#18202a;transform:scaleX(0.9300);-webkit-text-stroke:0.15px currentColor;">-</div>
<div class="t" style="left:1631.14px;top:757.84px;font-size:12px;font-weight:400;color:#18202a;transform:scaleX(0.9300);-webkit-text-stroke:0.15px currentColor;">-</div>
<div class="t" style="left:1709.64px;top:757.84px;font-size:12px;font-weight:400;color:#18202a;transform:scaleX(0.9300);-webkit-text-stroke:0.15px currentColor;">-</div>
<div class="t" style="left:1818.89px;top:757.84px;font-size:12px;font-weight:400;color:#18202a;transform:scaleX(0.9300);-webkit-text-stroke:0.15px currentColor;">1</div>
<div class="t" style="left:1912.18px;top:757.84px;font-size:12px;font-weight:400;color:#18202a;transform:scaleX(0.9300);-webkit-text-stroke:0.15px currentColor;">0.01%</div>
<div class="t" style="left:1981.39px;top:757.84px;font-size:12px;font-weight:400;color:#18202a;transform:scaleX(0.9300);-webkit-text-stroke:0.15px currentColor;">0</div>
<div class="t" style="left:283.00px;top:796.09px;font-size:11px;font-weight:400;color:#9a9a9a;transform:scaleX(0.9167);">Limit</div>
<div class="t" style="left:316.25px;top:796.09px;font-size:11px;font-weight:700;color:#fff;transform:scaleX(0.9388);">10</div>
<div class="t" style="left:343.20px;top:796.09px;font-size:11px;font-weight:400;color:#999;transform:scaleX(0.9633);">20</div>
<div class="t" style="left:370.50px;top:796.09px;font-size:11px;font-weight:400;color:#999;transform:scaleX(0.8816);">25</div>
<div class="t" style="left:396.90px;top:796.09px;font-size:11px;font-weight:400;color:#999;transform:scaleX(0.9306);">50</div>
<div class="t" style="left:422.40px;top:796.09px;font-size:11px;font-weight:400;color:#999;transform:scaleX(0.9260);">100</div>
<div class="t" style="left:451.70px;top:796.09px;font-size:11px;font-weight:400;color:#999;transform:scaleX(0.8878);">250</div>
<div class="t" style="left:480.40px;top:796.09px;font-size:11px;font-weight:400;color:#999;transform:scaleX(0.9042);">500</div>
<div class="t" style="left:1924.70px;top:795.69px;font-size:11px;font-weight:700;color:#fff;transform:scaleX(0.8163);">1</div>
<div class="t" style="left:1946.80px;top:795.69px;font-size:11px;font-weight:400;color:#888;transform:scaleX(0.9796);">2</div>
<div class="t" style="left:1970.00px;top:795.69px;font-size:11px;font-weight:400;color:#888;transform:scaleX(0.9796);">3</div>
<div style="position:absolute;left:2000.5px;top:41px;width:2.2px;height:7px;background:#f5b400;transform:rotate(28deg)"></div>
<div style="position:absolute;left:538px;top:106px;width:195px;height:30.5px;border:3.3px solid #ec0a12"></div>
<div style="position:absolute;left:345.9px;top:513px;width:696.7px;height:265.4px;border:3.4px solid #e8000e"></div>
</body></html>
